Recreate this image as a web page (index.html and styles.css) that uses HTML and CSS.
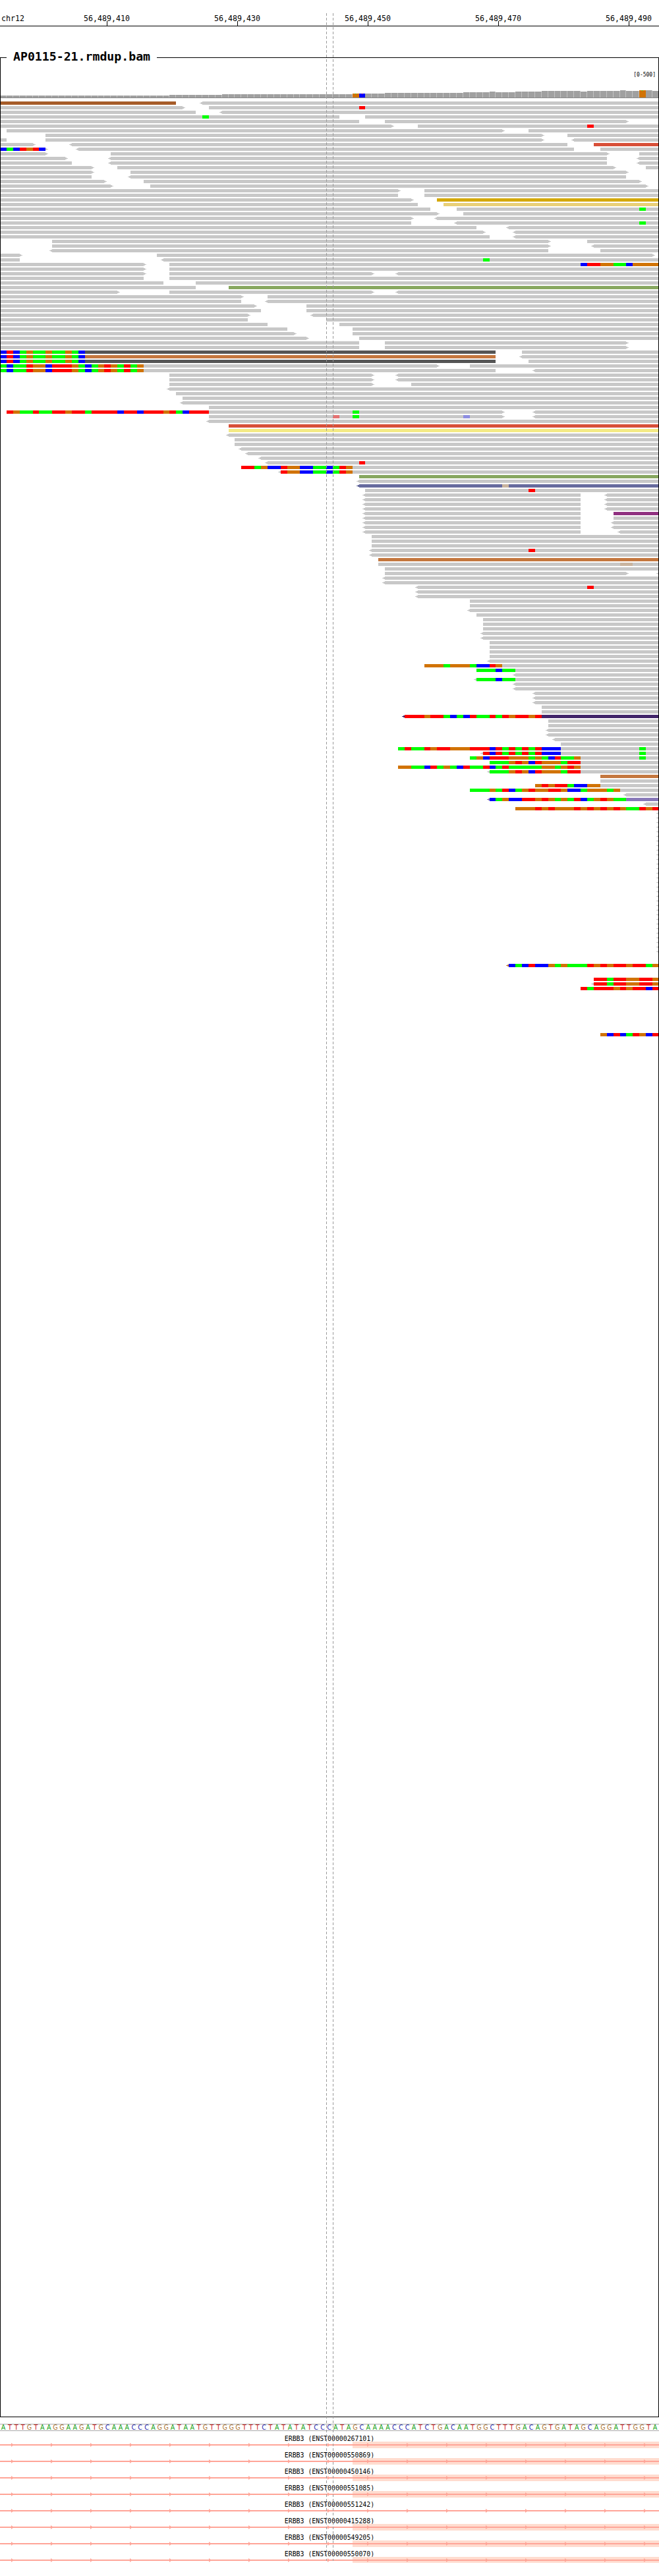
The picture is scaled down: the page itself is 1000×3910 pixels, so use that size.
FILE: index.html
```html
<!DOCTYPE html>
<html lang="en">
<head>
<meta charset="utf-8">
<title>AP0115-21.rmdup.bam</title>
<link rel="stylesheet" href="styles.css">
</head>
<body>
<main class="igv">
  <div class="guide guide-left"></div>
  <div class="guide guide-right"></div>

  <header class="ruler">
    <div class="chrom">chr12</div>
    <div class="tick">56,489,410</div>
    <div class="tick">56,489,430</div>
    <div class="tick">56,489,450</div>
    <div class="tick">56,489,470</div>
    <div class="tick">56,489,490</div>
  </header>

  <section class="track">
    <h1 class="track-title">AP0115-21.rmdup.bam</h1>
    <div class="scale">[0-500]</div>
    <svg id="reads" class="reads" viewBox="1 88 998 3580" width="998" height="3580"></svg>
  </section>

  <div id="sequence" class="sequence"></div>

  <svg class="defs" width="0" height="0">
    <defs>
      <pattern id="chevrons" x="17" y="0" width="60" height="10" patternUnits="userSpaceOnUse">
        <path class="intron-fill" d="M0 2L4 5L0 8Z"/>
      </pattern>
      <symbol id="intron" viewBox="0 0 1000 10" width="1000" height="10">
        <rect class="intron-fill" x="0" y="4" width="1000" height="2"/>
        <rect x="0" y="0" width="1000" height="10" fill="url(#chevrons)"/>
      </symbol>
    </defs>
  </svg>

  <section class="genes">
    <div class="gene"><div class="gene-label">ERBB3 (ENST00000267101)</div><svg class="gene-line" width="1000" height="10"><rect class="exon" x="535" width="465" height="10"/><use href="#intron"/></svg></div>
    <div class="gene"><div class="gene-label">ERBB3 (ENST00000550869)</div><svg class="gene-line" width="1000" height="10"><rect class="exon" x="535" width="465" height="10"/><use href="#intron"/></svg></div>
    <div class="gene"><div class="gene-label">ERBB3 (ENST00000450146)</div><svg class="gene-line" width="1000" height="10"><rect class="exon" x="535" width="465" height="10"/><use href="#intron"/></svg></div>
    <div class="gene"><div class="gene-label">ERBB3 (ENST00000551085)</div><svg class="gene-line" width="1000" height="10"><rect class="exon" x="535" width="465" height="10"/><use href="#intron"/></svg></div>
    <div class="gene"><div class="gene-label">ERBB3 (ENST00000551242)</div><svg class="gene-line" width="1000" height="10"><use href="#intron"/></svg></div>
    <div class="gene"><div class="gene-label">ERBB3 (ENST00000415288)</div><svg class="gene-line" width="1000" height="10"><rect class="exon" x="535" width="465" height="10"/><use href="#intron"/></svg></div>
    <div class="gene"><div class="gene-label">ERBB3 (ENST00000549205)</div><svg class="gene-line" width="1000" height="10"><rect class="exon" x="535" width="465" height="10"/><use href="#intron"/></svg></div>
    <div class="gene"><div class="gene-label">ERBB3 (ENST00000550070)</div><svg class="gene-line" width="1000" height="10"><rect class="exon" x="535" width="465" height="9"/><use href="#intron"/></svg></div>
  </section>
</main>
<script src="app.js"></script>
</body>
</html>
```
FILE: styles.css
```css
html, body {
  margin: 0;
  padding: 0;
  background: #fff;
}

.igv {
  position: relative;
  width: 1000px;
  height: 3910px;
  overflow: hidden;
  font-family: "DejaVu Sans Mono", "Liberation Mono", monospace;
  color: #000;
}

.guide {
  position: absolute;
  top: 20px;
  width: 1px;
  height: 3867px;
  z-index: 5;
  background: repeating-linear-gradient(to bottom, #9a9a9a 0 4px, transparent 4px 7px);
}
.guide-left { left: 495px; }
.guide-right { left: 505px; }

/* ruler */
.ruler {
  display: flex;
  height: 39px;
  border-bottom: 1px solid #000;
  overflow: hidden;
  font-size: 11.6px;
  line-height: 14px;
}
.chrom {
  flex: 0 0 61px;
  padding: 21px 0 0 2px;
}
.tick {
  position: relative;
  flex: 0 0 198px;
  padding-top: 21px;
  text-align: center;
}
.tick::after {
  content: "";
  position: absolute;
  left: 99px;
  bottom: 0;
  width: 1px;
  height: 7px;
  background: #000;
}

/* alignment track */
.track {
  position: relative;
  box-sizing: border-box;
  height: 3582px;
  margin-top: 47px;
  border: 1px solid #000;
}
.track-title {
  position: absolute;
  left: 9px;
  top: -15px;
  margin: 0;
  padding: 0 10px;
  background: #fff;
  font-size: 18.2px;
  font-weight: bold;
  line-height: 26px;
  white-space: nowrap;
}
.scale {
  position: absolute;
  right: 4px;
  top: 20px;
  font-size: 8px;
  line-height: 12px;
}
.reads {
  display: block;
}

.read { fill: #c8c8c8; }
.r { fill: #ff0000; }
.g { fill: #00ff00; }
.b { fill: #0000ff; }
.o { fill: #d17305; }
.cov { fill: #a0a0a0; }
.cov-gap { fill: #c2c2c2; }
.cov-base { fill: #8a8a8a; }
.brown { fill: #a65c28; }
.rust { fill: #d84f38; }
.gold { fill: #d4a80a; }
.sand { fill: #e9d078; }
.olive { fill: #87a75f; }
.dark { fill: #555555; }
.copper { fill: #c4773f; }
.lemon { fill: #f3ea85; }
.slate { fill: #676b9e; }
.tan { fill: #c9b49f; }
.plum { fill: #903080; }
.indigo { fill: #42256a; }
.lilac { fill: #8878b8; }
.pink { fill: #e57373; }
.periwinkle { fill: #8e8ee0; }

/* reference sequence */
.sequence {
  display: flex;
  box-sizing: border-box;
  height: 11px;
  margin-top: 10px;
  border-top: 1px solid #aaa;
  border-bottom: 1px solid #aaa;
  overflow: hidden;
  font-family: "DejaVu Sans", "Liberation Sans", sans-serif;
  font-size: 9.6px;
  line-height: 9px;
}
.base {
  flex: 0 0 9.9px;
  text-align: center;
}
.base-A { color: #12a012; }
.base-T { color: #c82020; }
.base-G { color: #b07a3a; }
.base-C { color: #3030b0; }

/* gene track */
.defs {
  position: absolute;
}
.genes {
  display: flex;
  flex-direction: column;
}
.gene {
  height: 25px;
}
.gene-label {
  padding-top: 6px;
  font-size: 9.85px;
  line-height: 12px;
  text-align: center;
  white-space: pre;
}
.gene-line {
  display: block;
  margin-top: -2px;
}
.exon { fill: #ffdccf; }
.intron-fill { fill: #ffa598; }
```
FILE: app.js
```js
var NS = "http://www.w3.org/2000/svg";
var svg = document.getElementById("reads");
var TOP = 154, PITCH = 7, H = 5;
var COLORS = { r: "r", g: "g", b: "b", o: "o", t: "tan", p: "pink", w: "periwinkle" };

function x(k) { return Math.floor(0.55 + 9.9 * k); }

function rect(px, py, w, h, cls) {
  var el = document.createElementNS(NS, "rect");
  el.setAttribute("x", px);
  el.setAttribute("y", py);
  el.setAttribute("width", w);
  el.setAttribute("height", h);
  el.setAttribute("class", cls);
  svg.appendChild(el);
}

function arrowLeft(px, y, cls) {
  rect(px - 2, y + 1, 2, 3, cls);
  rect(px - 4, y + 2, 2, 1, cls);
}
function arrowRight(px, y, cls) {
  rect(px, y + 1, 2, 3, cls);
  rect(px + 2, y + 2, 2, 1, cls);
}

/* tokens: "<a-b>~color" is a read, "<k=rgbo~color" a run of one-base cells */
function drawToken(token, y) {
  var parts = token.split("~");
  var cls = parts[1] || "read";
  var body = parts[0];
  var left = body.charAt(0) === "<";
  if (left) body = body.slice(1);
  if (body.indexOf("=") > -1) {
    var kv = body.split("=");
    var k = parseFloat(kv[0]);
    if (left) arrowLeft(x(k), y, cls);
    for (var i = 0; i < kv[1].length; i++) {
      rect(x(k + i), y, x(k + i + 1) - x(k + i), H, COLORS[kv[1].charAt(i)]);
    }
    return;
  }
  var right = body.charAt(body.length - 1) === ">";
  if (right) body = body.slice(0, -1);
  var se = body.split("-");
  var a = x(parseFloat(se[0])), b = x(parseFloat(se[1]));
  rect(a, y, b - a, H, cls);
  if (left) arrowLeft(a, y, cls);
  if (right) arrowRight(b, y, cls);
}

var ROWS = {
  0: "0-27~brown <31-101",
  1: "0-28> 32-101 55=r",
  2: "0-30 <34-101",
  3: "0-52 56-101 31=g",
  4: "0-55 59-96>",
  5: "0-60> 64-101 90=r",
  6: "1-77> 81-101",
  7: "7-83> 87-101",
  8: "0-1 7-83> <88-101",
  9: "0-5> <11-87 91-101~rust",
  10: "0-7> <12-88 92-101 0=bgbrorb",
  11: "0-7> 17-93> 98-101",
  12: "0-10> <17-93 <98-101",
  13: "0-11 <17-93 <98-101",
  14: "0-14> 18-94> 99-101",
  15: "0-14> 20-96>",
  16: "0-14 <20-96",
  17: "0-16> 22-98>",
  18: "0-17> 23-99>",
  19: "0-61> 65-101",
  20: "0-61 65-101",
  21: "0-63> 67-101~gold",
  22: "0-64 68-101~sand",
  23: "0-66 70-101 98=g",
  24: "0-67> 71-101",
  25: "0-63> <67-101",
  26: "0-63 <70-101 98=g",
  27: "0-73 <78-101",
  28: "0-74> <79-101",
  29: "0-75 <79-101",
  30: "8-84> 90-101",
  31: "8-84> <91-101",
  32: "<8-84 92-101",
  33: "0-3> 24-100>",
  34: "0-3 <25-101 74=g",
  35: "0-22> 26-101 89=brroogg 96=boooo",
  36: "0-22> 26-101",
  37: "0-22> 26-57> <61-101",
  38: "0-22 26-101",
  39: "0-25 30-101",
  40: "0-30 35-101~olive",
  41: "0-18> 26-57> <61-101",
  42: "0-37> 41-101",
  43: "0-37 <41-101",
  44: "0-39> 47-101",
  45: "0-40 47-101",
  46: "0-38> <48-101",
  47: "0-38 50-101",
  48: "0-41 52-101",
  49: "0-44 54-101",
  50: "0-45> 54-101",
  51: "0-47> 55-101",
  52: "0-55 59-96>",
  53: "0-55 59-96>",
  54: "13-76~dark 80-101 0=brbgoggoggogb",
  55: "13-76~copper <80-101 0=brbgoggoggogb",
  56: "13-76~dark 81-101 0=brbgoggoggogb",
  57: "22-67> 72-101 0=gbggroobrrrogbgorogrgo",
  58: "22-76 <82-101 0=gbggroobrrrogbgorogrgo",
  59: "26-57> <61-101",
  60: "26-57> <61-101",
  61: "26-57> 63-101",
  62: "<26-101",
  63: "27-101",
  64: "28-101",
  65: "<28-101",
  66: "32-101",
  67: "32-77> <82-101 1=roggrggrrorrgrrrrbrrbrrrorgbrrr 54=g",
  68: "32-77> <82-101 51=p 54=g 71=w",
  69: "<32-101",
  70: "35-101~rust",
  71: "35-101~lemon",
  72: "<35-101",
  73: "36-101",
  74: "36-101",
  75: "<37-101",
  76: "<38-101",
  77: "<40-101",
  78: "<41-101 55=r",
  79: "54-101 37=rrgobbroobbggbgro",
  80: "54-101 <43=roobbggbgro",
  81: "55-101~olive",
  82: "<55-101",
  83: "<55-101~slate 77=t",
  84: "56-101 81=r",
  85: "<56-89 <93-101",
  86: "<56-89 <93-101",
  87: "<56-89 <93-101",
  88: "<56-89 <93-101",
  89: "<56-89 94-101~plum",
  90: "<56-89 94-101",
  91: "<56-89 <94-101",
  92: "<56-89 <94-101",
  93: "<56-89 <95-101",
  94: "57-101",
  95: "57-101",
  96: "57-101",
  97: "<57-101 81=r",
  98: "<57-101",
  99: "58-101~copper",
  100: "58-101 95=tt",
  101: "59-101",
  102: "59-96> <101-101",
  103: "<59-101",
  104: "<59-101",
  105: "<64-101 90=r",
  106: "<64-101",
  107: "<64-101",
  108: "72-101",
  109: "72-101",
  110: "<72-101",
  111: "73-101",
  112: "74-101",
  113: "74-101",
  114: "74-101",
  115: "<74-101",
  116: "<74-101",
  117: "75-101",
  118: "75-101",
  119: "75-101",
  120: "75-101",
  121: "<75-101",
  122: "77-101 65=ooogooogbbro",
  123: "79-101 73=gggbgg",
  124: "<79-101",
  125: "79-101 <73=gggbgg",
  126: "<79-101",
  127: "<79-101",
  128: "<82-101",
  129: "<82-101",
  130: "<82-101",
  131: "83-101",
  132: "83-101",
  133: "83-101~indigo <62=rrrorrgbgbrggrgrorror~indigo",
  134: "84-101",
  135: "84-101",
  136: "<84-101",
  137: "<84-101",
  138: "<85-101",
  139: "86-101",
  140: "86-101 61=grggrorrooorrrbrgrgrgrbbb 98=g",
  141: "86-101 <74=rbrgrgrgrbbb 98=g",
  142: "89-101 72=gobrrrooogogbrggo 98=g",
  143: "89-101 75=gggorobrooogrr",
  144: "89-101 61=ooggbrgogbrggrbgrgggggoogoro",
  145: "89-101 <75=gggorobrooogrr",
  146: "92-101~copper",
  147: "92-101",
  148: "92-101 82=ororrgbboo",
  149: "95-101 72=gggogrbgoroorrobbgooogo",
  150: "<96-101",
  151: "96-101~lilac <75=bgobbrrorogogrbgorogg~lilac",
  152: "<99-101",
  153: "79=ooororooororororoggror",
  187: "<78=bgbrbbogogggrororrorrgo~copper",
  190: "91=rrgrroorro",
  191: "<91=rrgrroorro",
  192: "89=rgrrrororrbr",
  202: "92=obrbgrobr"
};

/* the run of reads that start just past the right edge */
for (var n = 154; n <= 184; n++) ROWS[n] = "<101-101";

/* coverage: [first base, last base exclusive, top y] */
var COVERAGE = [
  [0, 26, 145], [26, 34, 144], [34, 54, 143], [54, 59, 142],
  [59, 71, 141], [71, 75, 140], [75, 76, 139], [76, 79, 140], [79, 83, 139],
  [83, 89, 138], [89, 90, 139], [90, 95, 138], [95, 96, 137], [96, 98, 138],
  [98, 100, 137], [100, 102, 138]
];
var COV_COLOR = { 54: "o", 55: "b", 98: "o" };
var COV_DOT = { 54: "g", 55: "r", 98: "g" };

COVERAGE.forEach(function (seg) {
  for (var k = seg[0]; k < seg[1]; k++) {
    var px = x(k), w = x(k + 1) - px;
    if (COV_COLOR[k]) {
      rect(px, seg[2], w, 148 - seg[2], COV_COLOR[k]);
      rect(px + 4, seg[2], 1, 1, COV_DOT[k]);
    } else {
      rect(px, seg[2], w, 148 - seg[2], "cov-gap");
      rect(px, seg[2], w - 1, 148 - seg[2], "cov");
    }
  }
});
rect(0, 148, 1000, 1, "cov-base");

Object.keys(ROWS).forEach(function (key) {
  var y = TOP + PITCH * parseInt(key, 10);
  ROWS[key].split(" ").forEach(function (token) { drawToken(token, y); });
});

/* reference sequence */
var SEQ = "ATTTGTAAGGAAGATGCAAACCCAGGATAATGTTGGGTTTCTATATATCCCATAGCAAAACCCATCTGACAATGGCTTTGACAGTGATAGCAGGATTGGTA";
var seqEl = document.getElementById("sequence");
SEQ.split("").forEach(function (c) {
  var s = document.createElement("span");
  s.className = "base base-" + c;
  s.textContent = c;
  seqEl.appendChild(s);
});
```
